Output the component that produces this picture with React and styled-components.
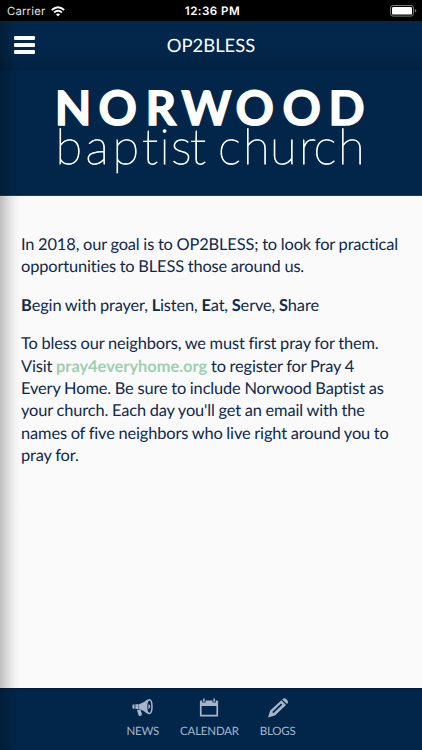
import React from 'react';
import styled, { createGlobalStyle } from 'styled-components';

//* Styles

const GlobalStyle = createGlobalStyle`
  *,
  *:before,
  *:after {
    box-sizing: border-box;
  }
  body {
    margin: 0;
    font-family: 'Lato', sans-serif;
    background-color: #fafafa;
    color: #0f294b;
    text-rendering: geometricPrecision;
    -webkit-font-smoothing: antialiased;
  }
`;

const Screen = styled.div`
  position: relative;
  display: flex;
  flex-direction: column;
  height: 750px;
  overflow: hidden;
`;

// shadow left by the side menu, lies over the page
const EdgeShadow = styled.div`
  position: absolute;
  top: 21px;
  bottom: 0;
  left: 0;
  width: 20px;
  pointer-events: none;
  background: linear-gradient(
    to right,
    rgba(0, 0, 0, 0.24),
    rgba(0, 0, 0, 0.15) 30%,
    rgba(0, 0, 0, 0.05) 65%,
    rgba(0, 0, 0, 0)
  );
`;

const StatusBar = styled.div`
  display: grid;
  grid-template-columns: 1fr auto 1fr;
  align-items: center;
  flex: none;
  height: 21px;
  padding: 1px 5px 0 7px;
  background-color: #000;
  color: #fff;
  font-family: 'Inter', sans-serif;
  font-size: 11.3px;
`;

const Carrier = styled.span`
  display: flex;
  align-items: center;
  gap: 6px;
  color: #e4e4e4;
  letter-spacing: 0.2px;
`;

const Clock = styled.span`
  font-weight: 600;
  font-size: 11.6px;
  letter-spacing: 0.45px;
  padding-left: 1px;
`;

const Battery = styled.svg`
  justify-self: end;
`;

const NavBar = styled.header`
  display: grid;
  grid-template-columns: 60px 1fr 60px;
  align-items: center;
  flex: none;
  height: 49px;
  background: linear-gradient(#03284c, #022649 70%, #02223f);
  color: #fff;
`;

const MenuButton = styled.button`
  display: flex;
  flex-direction: column;
  gap: 3px;
  width: 21px;
  margin: 0 0 1px 14px;
  padding: 0;
  border: 0;
  background: none;
`;

const MenuBar = styled.span`
  height: 4px;
  border-radius: 1px;
  background-color: #fff;
`;

const Title = styled.h1`
  margin: 0 0 1px;
  font-size: 18.4px;
  font-weight: 400;
  line-height: 24px;
  text-align: center;
`;

const Banner = styled.div`
  flex: none;
  height: 126px;
  background-color: #022649;
  border-bottom: 1px solid #1b3e60;
`;

const Content = styled.main`
  flex: 1;
  padding: 38px 18px 0 21px;
  font-size: 16.4px;
  line-height: 22.4px;
  letter-spacing: -0.13px;
  word-spacing: -0.3px;

  p {
    margin: 0 0 16px;
  }
`;

const Link = styled.a`
  color: #9dd0b0;
  font-weight: 700;
  letter-spacing: 0;
  text-decoration: none;
`;

const TabBar = styled.nav`
  display: flex;
  justify-content: center;
  gap: 21px;
  flex: none;
  height: 62px;
  padding-top: 9px;
  background-color: #022649;
  border-top: 1px solid #001b38;
`;

const Tab = styled.a`
  display: flex;
  flex-direction: column;
  align-items: center;
  gap: 7px;
  color: #a5b6cb;
  font-size: 11.5px;
  line-height: 14px;
  letter-spacing: -0.2px;
`;

const LogoName = styled.text`
  font-family: 'Lato', sans-serif;
  font-size: 47.5px;
  font-weight: 700;
  stroke: #fff;
  stroke-width: 1.4px;
`;

const LogoKind = styled.text`
  font-family: 'Lato', sans-serif;
  font-size: 49px;
  font-weight: 200;
  stroke: #fff;
  stroke-width: 0.9px;
`;

//* -------------------------------------------------------------------------

const WifiIcon = () => (
  <svg width="14" height="11" viewBox="0 0 14 11" fill="none" stroke="#fff">
    <path d="M.8 4Q7-1.6 13.2 4" strokeWidth="1.8" />
    <path d="M3.1 6.5Q7 3 10.9 6.5" strokeWidth="1.7" />
    <path d="M7 10.4L4.9 8.3Q7 6.7 9.1 8.3Z" fill="#fff" stroke="none" />
  </svg>
);

const Logo = () => (
  <svg width="422" height="125" viewBox="0 70 422 125" fill="#fff">
    <LogoName x="54.8 98.5 145.5 181.5 235.5 282.5 328.5" y="124.8">
      NORWOOD
    </LogoName>
    <LogoKind
      x="55.5 85.5 112.4 142 159.5 171 190 210 218 243 270 299 313.5 338"
      y="163.6"
    >
      baptist church
    </LogoKind>
  </svg>
);

const NewsIcon = () => (
  <svg width="21" height="20" viewBox="0 0 21 20" fill="currentColor">
    <path d="M1 6.4h1.6v4.4H1q-.6-.1-.6-2.2t.6-2.2z" />
    <path d="M3.4 6.2h3.2v4.8H3.4z" />
    <path d="M7 6.2Q12 5 15.8 1q-1.6 3.6-1.6 7.6t1.6 7.6Q12 12.2 7 11z" />
    <path d="M5 11.8h3.6q.1 1.8 1.4 3.6l-.5 2.2-2.4.6Q5.6 15 5 11.8z" />
    <ellipse cx="17.3" cy="8.6" rx="2.7" ry="6.9" fill="none" stroke="currentColor" strokeWidth="1.5" />
    <path d="M16.4 6.3q1.9.4 1.9 2.3t-1.9 2.3z" />
  </svg>
);

const CalendarIcon = () => (
  <svg width="20" height="20" viewBox="0 0 20 20" fill="currentColor">
    <path
      fillRule="evenodd"
      d="M1.8 2.6h1.4v2h3.2v-2h7.2v2h3.2v-2h1.4q.9 0 .9.9v14.2q0 .9-.9.9H1.8q-.9 0-.9-.9V3.5q0-.9.9-.9zM2.6 7.9v8.9h14.8V7.9z"
    />
    <path d="M4 .6h1.6v3.2H4zM14.4.6H16v3.2h-1.6z" />
  </svg>
);

const BlogIcon = () => (
  <svg width="22" height="20" viewBox="0 0 22 20" fill="currentColor">
    <path
      fillRule="evenodd"
      d="M14.4 2.3l4.6 4.6L8 17.4 1 19.6l2.2-7zM14 5.5L5.2 14l1.2 1.2L15.3 6.7z"
    />
    <path d="M15.3 1.5l1-.9q1.3-.9 3.3.9t1.3 3.4l-1 1.1z" />
  </svg>
);

const tabs = [
  { label: 'NEWS', Icon: NewsIcon },
  { label: 'CALENDAR', Icon: CalendarIcon },
  { label: 'BLOGS', Icon: BlogIcon }
];

const App = () => (
  <Screen>
    <GlobalStyle />
    <StatusBar>
      <Carrier>
        Carrier <WifiIcon />
      </Carrier>
      <Clock>12:36 PM</Clock>
      <Battery width="27" height="12" viewBox="0 0 27 12">
        <rect x=".5" y=".5" width="23" height="10.6" rx="2.5" fill="none" stroke="#777" />
        <rect x="2" y="2" width="20" height="7.6" rx="1.2" fill="#fff" />
        <path d="M24.8 4q1.5.3 1.5 1.8t-1.5 1.8z" fill="#777" />
      </Battery>
    </StatusBar>
    <NavBar>
      <MenuButton aria-label="Menu">
        <MenuBar />
        <MenuBar />
        <MenuBar />
      </MenuButton>
      <Title>OP2BLESS</Title>
    </NavBar>
    <Banner>
      <Logo />
    </Banner>
    <Content>
      <p>
        In 2018, our goal is to OP2BLESS; to look for practical opportunities to
        BLESS those around us.
      </p>
      <p>
        <b>B</b>egin with prayer, <b>L</b>isten, <b>E</b>at, <b>S</b>erve,{' '}
        <b>S</b>hare
      </p>
      <p>
        To bless our neighbors, we must first pray for them.
        <br />
        Visit <Link>pray4everyhome.org</Link> to register for Pray 4<br />
        Every Home. Be sure to include Norwood Baptist as your church. Each day
        you'll get an email with the names of five neighbors who live right
        around you to pray for.
      </p>
    </Content>
    <TabBar>
      {tabs.map(({ label, Icon }) => (
        <Tab key={label}>
          <Icon />
          {label}
        </Tab>
      ))}
    </TabBar>
    <EdgeShadow />
  </Screen>
);

export default App;
